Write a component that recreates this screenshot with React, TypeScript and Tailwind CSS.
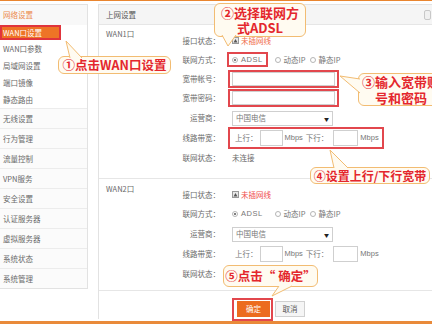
import React from "react";

function Radio({ on }: { on?: boolean }) {
  return (
    <span className="inline-flex items-center justify-center w-[6px] h-[6px] rounded-full border border-[#b5b5b5] bg-white shrink-0">
      {on ? <span className="w-[2px] h-[2px] rounded-full bg-[#555]" /> : null}
    </span>
  );
}

function PortIcon() {
  return (
    <svg width="7" height="7" viewBox="0 0 7 7" className="shrink-0">
      <rect x="0.5" y="0.5" width="6" height="6" fill="#e8e8e8" stroke="#999" />
      <path d="M1.5 5.5 L3.5 2 L5.5 5.5 Z" fill="#555" />
    </svg>
  );
}

function Row({ label, h, children }: { label: string; h: string; children?: React.ReactNode }) {
  return (
    <div className={`flex items-center ${h}`}>
      <div className="w-[38px] text-right whitespace-nowrap">{label}</div>
      <div className="ml-[12px] flex items-center">{children}</div>
    </div>
  );
}

function Select() {
  return (
    <div className="w-[101px] h-[15px] border border-[#cfcfcf] flex items-center justify-between px-[3px] text-[#777]">
      <span>中国电信</span>
      <span className="text-[5px] text-[#222]">▼</span>
    </div>
  );
}

function Bandwidth() {
  return (
    <div className="flex items-center pl-[3px] text-[#777]">
      <span>上行：</span>
      <span className="ml-[2px] w-[23px] h-[16px] border border-[#cfcfcf]" />
      <span className="ml-[2px] font-['Liberation_Sans',sans-serif]">Mbps</span>
      <span className="ml-[3px]">下行：</span>
      <span className="ml-[5px] w-[25px] h-[16px] border border-[#cfcfcf]" />
      <span className="ml-[2px] font-['Liberation_Sans',sans-serif]">Mbps</span>
    </div>
  );
}

function Radios({ boxed }: { boxed?: boolean }) {
  return (
    <div className="flex items-center text-[#777]">
      <div className="relative flex items-center gap-[3px]">
        <Radio on />
        <span className="font-['Liberation_Sans',sans-serif] tracking-[0.5px]">ADSL</span>
        {boxed ? <span className="absolute -left-[5px] -right-[5px] -top-[4px] -bottom-[4px] border-2 border-[#e2474d]" /> : null}
      </div>
      <div className="ml-[12px] flex items-center gap-[3px]">
        <Radio />
        <span>动态IP</span>
      </div>
      <div className="ml-[4px] flex items-center gap-[3px]">
        <Radio />
        <span>静态IP</span>
      </div>
    </div>
  );
}

function Sidebar() {
  const sub = ["WAN口参数", "局域网设置", "端口镜像", "静态路由"];
  const main = ["无线设置", "行为管理", "流量控制", "VPN服务", "安全设置", "认证服务器", "虚拟服务器", "系统状态", "系统管理"];
  return (
    <div className="w-[88px] self-start border-r border-b border-t border-[#e2e2e2] bg-white">
      <div className="h-[20px] flex items-center pl-[3px] text-[#ec8a4c] bg-[#f8f8f8]">网络设置</div>
      <div className="h-[15px] flex">
        <div className="w-[61px] h-full bg-[#ee7426] border-2 border-[#e0343c] text-white flex items-center pl-[1px]">WAN口设置</div>
      </div>
      {sub.map((s) => (
        <div key={s} className="h-[17px] flex items-center pl-[3px]">{s}</div>
      ))}
      {main.map((s) => (
        <div key={s} className="h-[20px] flex items-center pl-[3px] border-t border-[#ececec] bg-[#fbfbfb]">{s}</div>
      ))}
    </div>
  );
}

function MainPanel() {
  return (
    <div className="flex-1 ml-[10px] border-l border-t border-[#e2e2e2] flex flex-col">
      <div className="h-[20px] shrink-0 bg-[#f5f5f5] border-b border-[#e6e6e6] flex items-center justify-between pl-[7px] pr-[1px]">
        <span className="text-[#555]">上网设置</span>
        <span className="w-[7px] h-[10px] rounded-[2px] border border-[#c8c8c8] bg-[#f0f0f0]" />
      </div>
      {/* WAN1 */}
      <div className="flex pl-[7px] pt-[6px] pb-[10px] border-b border-[#e6e6e6]">
        <div className="w-[76px] leading-[10px] -mt-[2px]">WAN1口</div>
        <div className="flex flex-col">
          <Row label="接口状态：" h="h-[19px]">
            <div className="flex items-center gap-[2px]">
              <PortIcon />
              <span className="text-[#ef6b4a]">未插网线</span>
            </div>
          </Row>
          <Row label="联网方式：" h="h-[19px]">
            <Radios boxed />
          </Row>
          <Row label="宽带帐号：" h="h-[19px]">
            <div className="relative">
              <div className="w-[103px] h-[14px] border border-[#cfcfcf]" />
              <span className="absolute -left-[4px] -right-[4px] -top-[2px] -bottom-[2px] border-2 border-[#e2474d]" />
            </div>
          </Row>
          <Row label="宽带密码：" h="h-[20px]">
            <div className="relative">
              <div className="w-[103px] h-[14px] border border-[#cfcfcf]" />
              <span className="absolute -left-[4px] -right-[4px] -top-[2px] -bottom-[2px] border-2 border-[#e2474d]" />
            </div>
          </Row>
          <Row label="运营商：" h="h-[20px]">
            <Select />
          </Row>
          <Row label="线路带宽：" h="h-[20px]">
            <div className="relative">
              <Bandwidth />
              <span className="absolute -left-[4px] -right-[5px] -top-[3px] -bottom-[3px] border-2 border-[#e2474d]" />
            </div>
          </Row>
          <Row label="联网状态：" h="h-[20px]">
            <span>未连接</span>
          </Row>
        </div>
      </div>
      {/* WAN2 */}
      <div className="flex pl-[7px] pt-[6px] pb-[6px] border-b border-[#e6e6e6]">
        <div className="w-[76px] leading-[10px] -mt-[1px]">WAN2口</div>
        <div className="flex flex-col">
          <Row label="接口状态：" h="h-[19px]">
            <div className="flex items-center gap-[2px]">
              <PortIcon />
              <span className="text-[#ef4b4b]">未插网线</span>
            </div>
          </Row>
          <Row label="联网方式：" h="h-[20px]">
            <Radios />
          </Row>
          <Row label="运营商：" h="h-[20px]">
            <Select />
          </Row>
          <Row label="线路带宽：" h="h-[20px]">
            <Bandwidth />
          </Row>
          <Row label="联网状态：" h="h-[20px]" />
        </div>
      </div>
      {/* buttons */}
      <div className="flex pl-[138px] pt-[10px] gap-[5px]">
        <div className="relative">
          <div className="w-[33px] h-[16px] bg-[#ec6c1f] text-white flex items-center justify-center">确定</div>
          <span className="absolute -left-[5px] -right-[3px] -top-[3px] -bottom-[4px] border-2 border-[#e2474d]" />
        </div>
        <div className="w-[30px] h-[16px] bg-[#f5f5f5] border border-[#d0d0d0] flex items-center justify-center text-[#555]">取消</div>
      </div>
    </div>
  );
}

const bubble =
  "absolute bg-[#fffbf1] border border-[#f2bc72] rounded-[6px] text-[#e4272d] font-bold flex flex-col items-center justify-center whitespace-nowrap";

export default function App() {
  const tails: { b1: [number, number]; tip: [number, number]; b2: [number, number] }[] = [
    { b1: [70, 58], tip: [66, 41], b2: [82, 58] },
    { b1: [222, 35], tip: [228, 46], b2: [236, 35] },
    { b1: [360, 79], tip: [340, 76], b2: [360, 93] },
    { b1: [334, 168], tip: [330, 150], b2: [348, 168] },
    { b1: [279, 286], tip: [272, 296], b2: [292, 286] },
  ];
  return (
    <div className="relative w-[432px] h-[324px] overflow-hidden bg-white font-['Noto_Sans_CJK_SC','Liberation_Sans',sans-serif] text-[7.5px] leading-none text-[#6a6a6a] flex flex-col">
      <div className="h-[1px] shrink-0 bg-[#e9852f]" />
      <div className="flex flex-1 pt-[3px] pb-[2px]">
        <Sidebar />
        <MainPanel />
      </div>
      <div className="h-[3px] shrink-0 bg-[#e98a3a]" />

      {/* annotations */}
      <div className={`${bubble} left-[58px] top-[56px] w-[113px] h-[18px] text-[12.5px]`}>①点击WAN口设置</div>
      <div className={`${bubble} left-[214px] top-[3px] w-[92px] h-[34px] text-[13px] leading-[15px]`}>
        <span>②选择联网方</span>
        <span>式ADSL</span>
      </div>
      <div className={`${bubble} left-[358px] top-[73px] w-[86px] h-[33px] text-[13px] leading-[16px]`}>
        <span>③输入宽带账</span>
        <span>号和密码</span>
      </div>
      <div className={`${bubble} left-[310px] top-[167px] w-[120px] h-[17px] text-[12px]`}>④设置上行/下行宽带</div>
      <div className={`${bubble} left-[223px] top-[265px] w-[95px] h-[22px] text-[12.5px]`}>⑤点击“ 确定”</div>

      <svg className="absolute inset-0 pointer-events-none" width="432" height="324" viewBox="0 0 432 324">
        {tails.map((t, i) => (
          <g key={i}>
            <polygon points={`${t.b1.join(",")} ${t.tip.join(",")} ${t.b2.join(",")}`} fill="#fffbf1" />
            <polyline points={`${t.b1.join(",")} ${t.tip.join(",")} ${t.b2.join(",")}`} fill="none" stroke="#f2bc72" strokeWidth="1" />
          </g>
        ))}
      </svg>
    </div>
  );
}
